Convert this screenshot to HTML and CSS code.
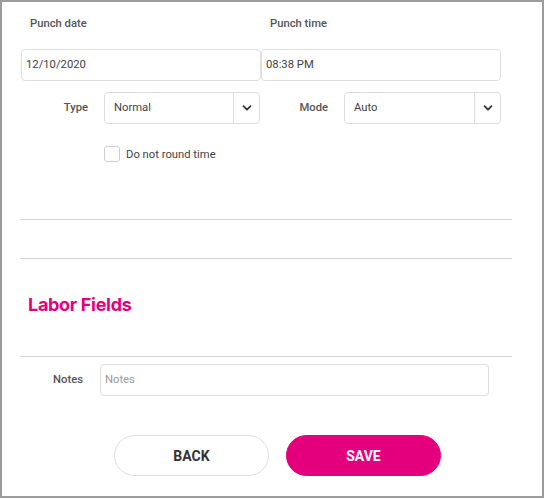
FILE: index.html
```html
<!DOCTYPE html>
<html>
<head>
<meta charset="utf-8">
<link rel="stylesheet" href="styles.css">
</head>
<body>
<div class="frame">
  <div class="top">
    <div class="row labels">
      <div class="lbl">Punch date</div>
      <div class="lbl">Punch time</div>
    </div>
    <div class="row inputs">
      <div class="field">12/10/2020</div>
      <div class="field">08:38 PM</div>
    </div>
    <div class="row selects">
      <div class="sel-group">
        <div class="sel-label">Type</div>
        <div class="select select-a">
          <span class="sel-val">Normal</span>
          <span class="sel-btn"><svg width="10" height="6" viewBox="0 0 10 6"><path d="M1.5 1.2 L5 4.7 L8.5 1.2" fill="none" stroke="#333" stroke-width="1.7" stroke-linecap="round" stroke-linejoin="round"/></svg></span>
        </div>
      </div>
      <div class="sel-group">
        <div class="sel-label">Mode</div>
        <div class="select select-b">
          <span class="sel-val">Auto</span>
          <span class="sel-btn"><svg width="10" height="6" viewBox="0 0 10 6"><path d="M1.5 1.2 L5 4.7 L8.5 1.2" fill="none" stroke="#333" stroke-width="1.7" stroke-linecap="round" stroke-linejoin="round"/></svg></span>
        </div>
      </div>
    </div>
    <div class="check-row">
      <span class="checkbox"></span>
      <span class="check-text">Do not round time</span>
    </div>
  </div>
  <div class="rule r1"></div>
  <div class="rule r2"></div>
  <h2 class="section">Labor Fields</h2>
  <div class="rule r3"></div>
  <div class="notes-row">
    <div class="notes-label">Notes</div>
    <div class="notes-input">Notes</div>
  </div>
  <div class="buttons">
    <button class="btn btn-back">BACK</button>
    <button class="btn btn-save">SAVE</button>
  </div>
</div>
</body>
</html>
```

FILE: styles.css
```css
* { box-sizing: border-box; }
html, body { margin: 0; padding: 0; background: #fff; }
body { font-family: Roboto, "Liberation Sans", sans-serif; color: #444; }

.frame {
  width: 544px;
  height: 498px;
  border: 2px solid #9c9c9c;
  padding: 14px 0 0 18px;
  background: #fff;
}

.top { margin-left: 1px; }

.row { display: flex; }

.labels { height: 16px; }
.lbl {
  width: 240px;
  padding-left: 9px;
  font-size: 11.25px;
  line-height: 16px;
  font-weight: 500;
  color: #555;
}

.inputs { margin-top: 17px; }
.field {
  width: 240px;
  height: 32px;
  border: 1px solid #dedede;
  border-radius: 4px;
  padding-left: 4px;
  font-size: 11.25px;
  line-height: 30px;
  color: #444;
}

.selects { margin-top: 11px; }
.sel-group { display: flex; width: 240px; }
.sel-label {
  width: 83px;
  padding-right: 16px;
  text-align: right;
  font-size: 11.25px;
  font-weight: 500;
  color: #555;
  line-height: 32px;
}
.select {
  display: flex;
  height: 32px;
  border: 1px solid #dedede;
  border-radius: 4px;
}
.select-a { width: 156px; }
.select-b { width: 157px; }
.sel-val {
  flex: 1;
  padding-left: 9px;
  font-size: 11.25px;
  line-height: 30px;
  color: #444;
}
.sel-btn {
  width: 26px;
  border-left: 1px solid #dedede;
  display: flex;
  align-items: center;
  justify-content: center;
}

.check-row {
  display: flex;
  align-items: center;
  margin-top: 22px;
  margin-left: 83px;
  height: 16px;
}
.checkbox {
  width: 16px;
  height: 16px;
  border: 1px solid #cfcfcf;
  border-radius: 3px;
}
.check-text {
  margin-left: 6px;
  font-size: 11.25px;
  color: #444;
}

.rule {
  width: 492px;
  height: 1px;
  background: #d6d6d6;
}
.r1 { margin-top: 57px; }
.r2 { margin-top: 38px; }
.r3 { margin-top: 39px; }

.section {
  margin: 34px 0 0 8px;
  font-family: Inter, "Liberation Sans", sans-serif;
  font-size: 18px;
  line-height: 24px;
  font-weight: 700;
  color: #e4007c;
  letter-spacing: -0.3px;
}

.notes-row { display: flex; margin-top: 7px; }
.notes-label {
  width: 80px;
  padding-right: 17px;
  text-align: right;
  font-size: 11.25px;
  font-weight: 500;
  color: #555;
  line-height: 32px;
}
.notes-input {
  width: 389px;
  height: 32px;
  border: 1px solid #dedede;
  border-radius: 4px;
  padding-left: 4px;
  font-size: 11.25px;
  line-height: 30px;
  color: #999;
}

.buttons {
  display: flex;
  gap: 17px;
  margin-top: 39px;
  margin-left: 94px;
}
.btn {
  width: 155px;
  height: 41px;
  border-radius: 21px;
  font-family: Roboto, "Liberation Sans", sans-serif;
  font-size: 14px;
  font-weight: 700;
  padding: 0;
  cursor: pointer;
}
.btn-back {
  background: #fff;
  border: 1px solid #dedede;
  color: #333;
}
.btn-save {
  background: #e4007c;
  border: 1px solid #e4007c;
  color: #fff;
}
```
